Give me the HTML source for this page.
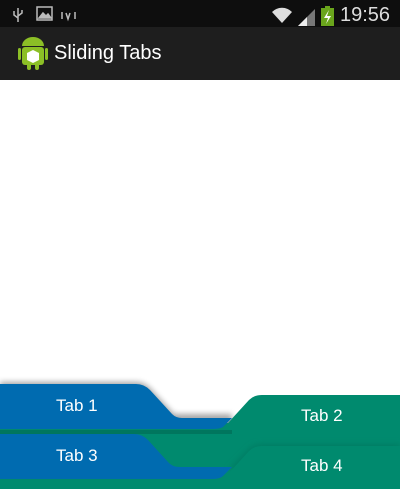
<!DOCTYPE html>
<html><head><meta charset="utf-8"><style>
body{margin:0;width:400px;height:489px;overflow:hidden;background:#fff;font-family:"Liberation Sans",sans-serif;position:relative}
.sb{position:absolute;left:0;top:0;width:400px;height:27px;background:#0e0e0e}
.ab{position:absolute;left:0;top:27px;width:400px;height:53px;background:#1e1e1e}
.t{position:absolute;color:#fff}
</style></head><body>
<div class="sb"></div>
<div class="ab"></div>
<svg width="400" height="489" style="position:absolute;left:0;top:0">
<defs><filter id="sh" x="-10%" y="-50%" width="120%" height="200%"><feGaussianBlur stdDeviation="3"/></filter></defs>
<g stroke="#bbb" fill="none" stroke-width="1.5">
<path d="M18 8v14M14 11v4l4 3M22 10v3l-4 3"/>
<rect x="37" y="7" width="15" height="13"/>
<path d="M39 18l4-5 3 3 2-2 3 4z" fill="#bbb"/>
<path d="M62 12v7M66 13l2 6 2-6M75 12v7"/>
</g>
<path d="M272 12a14 14 0 0 1 20 0l-10 11z" fill="#ddd"/>
<path d="M298 26l17-17v17z" fill="#777"/><path d="M298 26l9-9v9z" fill="#eee"/>
<rect x="321" y="8" width="13" height="18" fill="#6aa51c"/><rect x="325" y="6" width="5" height="3" fill="#6aa51c"/>
<path d="M329 10l-5 8h4l-2 6 5-8h-4z" fill="#fff"/>
<rect x="22" y="47" width="22" height="18" rx="3" fill="#8cbf26"/>
<path d="M22 46a11 9 0 0 1 22 0z" fill="#8cbf26"/>
<rect x="18" y="48" width="3" height="12" rx="1.5" fill="#8cbf26"/><rect x="45" y="48" width="3" height="12" rx="1.5" fill="#8cbf26"/>
<rect x="27" y="63" width="4" height="7" rx="2" fill="#8cbf26"/><rect x="35" y="63" width="4" height="7" rx="2" fill="#8cbf26"/>
<path d="M33 50l6 3v7l-6 3-6-3v-7z" fill="#fff"/>
<path d="M0,382 L136,382 Q144,382 150,388 L174,414 L232,414 L232,430 L0,430Z" fill="#000" opacity=".35" filter="url(#sh)"/>
<path d="M400,395 L262,395 Q254,395 249,400 L228,423 L0,426 L0,489 L400,489Z" fill="#008a6e"/>
<path d="M0,384 L136,384 Q144,384 150,390 L172,414 Q176,418 182,418 L232,418 L223,427 Q220,429 212,429 L0,429Z" fill="#006bb0"/>
<path d="M0,430 L232,430 L232,434 L0,434Z" fill="#00765e"/>
<path d="M400,444 L262,444 Q254,444 249,449 L230,468 L230,470 L400,470Z" fill="#007d64" filter="url(#sh)"/>
<path d="M400,446 L262,446 Q254,446 249,451 L228,474 L0,476 L0,489 L400,489Z" fill="#008a6e"/>
<path d="M0,434 L134,434 Q142,434 148,440 L168,462 Q172,467 180,467 L232,467 L223,476 Q220,479 212,479 L0,479Z" fill="#006bb0"/>
</svg>
<div class="t" style="left:54px;top:42px;font-size:20px">Sliding Tabs</div>
<div class="t" style="left:340px;top:4px;font-size:20px;color:#ddd">19:56</div>
<div class="t" style="left:56px;top:396px;font-size:17px">Tab 1</div>
<div class="t" style="left:301px;top:406px;font-size:17px">Tab 2</div>
<div class="t" style="left:56px;top:446px;font-size:17px">Tab 3</div>
<div class="t" style="left:301px;top:456px;font-size:17px">Tab 4</div>
</body></html>
